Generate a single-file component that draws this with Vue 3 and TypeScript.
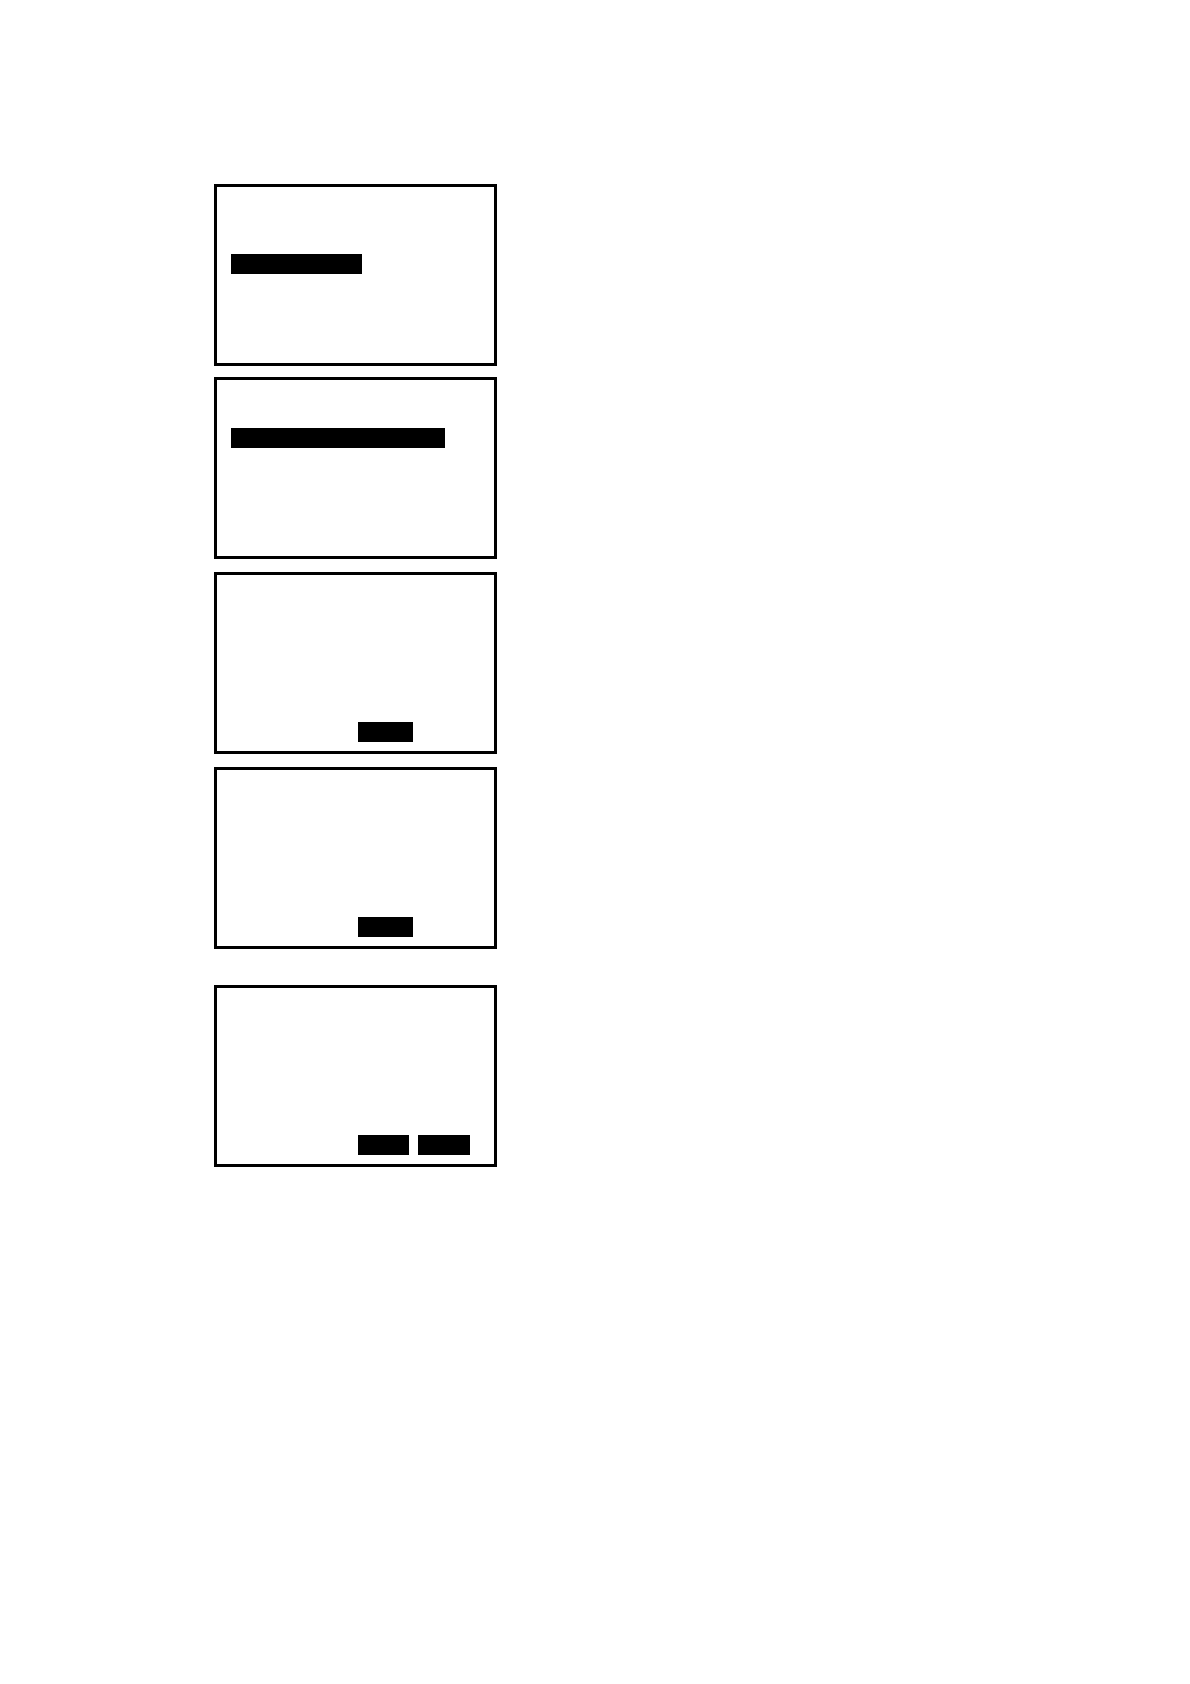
<script setup lang="ts">
interface Screen {
  id: string
  layout: 'menu' | 'list' | 'dialog'
  bars: number[]
}

interface Group {
  id: string
  screens: Screen[]
}

const groups: Group[] = [
  { id: 'selection', screens: [{ id: 'menu', layout: 'menu', bars: [131] }] },
  {
    id: 'steps',
    screens: [
      { id: 'list', layout: 'list', bars: [214] },
      { id: 'first', layout: 'dialog', bars: [55] },
      { id: 'second', layout: 'dialog', bars: [55] },
    ],
  },
  { id: 'result', screens: [{ id: 'choice', layout: 'dialog', bars: [51, 52] }] },
]
</script>

<template>
  <main class="page">
    <section v-for="group in groups" :key="group.id" class="group" :class="group.id">
      <div v-for="screen in group.screens" :key="screen.id" class="screen" :class="screen.layout">
        <span
          v-for="(width, index) in screen.bars"
          :key="index"
          class="bar"
          :style="{ width: `${width}px` }"
        ></span>
      </div>
    </section>
  </main>
</template>

<style>
body {
  background: #fff;
}
</style>

<style scoped>
.page {
  display: flex;
  flex-direction: column;
  padding: 184px 24px 184px 18%;
}

.group {
  display: flex;
  flex-direction: column;
  gap: 13px;
}

.steps {
  margin-top: 11px;
}

.result {
  margin-top: 36px;
}

.screen {
  box-sizing: border-box;
  display: flex;
  gap: 9px;
  width: 100%;
  max-width: 283px;
  min-height: 182px;
  padding: 9px 14px;
  border: 3px solid #000;
}

.menu {
  padding-top: 67px;
}

.list {
  padding-top: 48px;
}

.dialog {
  align-items: flex-end;
  padding-left: 141px;
}

.bar {
  flex: none;
  height: 20px;
  background: #000;
}
</style>
